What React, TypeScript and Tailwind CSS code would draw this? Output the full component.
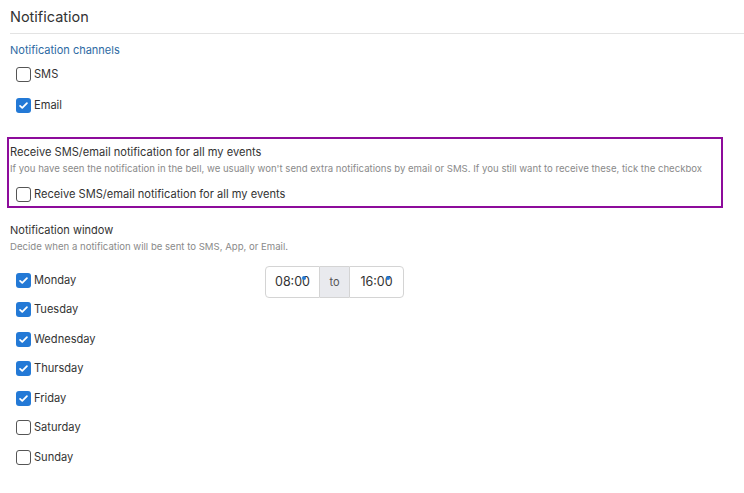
import { useState } from 'react'

const days = [
  { name: 'Monday', on: true },
  { name: 'Tuesday', on: true },
  { name: 'Wednesday', on: true },
  { name: 'Thursday', on: true },
  { name: 'Friday', on: true },
  { name: 'Saturday', on: false },
  { name: 'Sunday', on: false },
]

function Box({ checked }: { checked: boolean }) {
  if (checked) {
    return (
      <span className="flex h-[15px] w-[15px] shrink-0 items-center justify-center rounded-[3px] bg-[#2379d6]">
        <svg viewBox="0 0 16 16" className="h-[11px] w-[11px]" fill="none" stroke="white" strokeWidth="2.6" strokeLinecap="round" strokeLinejoin="round">
          <path d="M3 8.5l3.2 3L13 4.5" />
        </svg>
      </span>
    )
  }
  return <span className="h-[15px] w-[15px] shrink-0 rounded-[3px] border border-[#555] bg-white" />
}

function Check({ label, initial }: { label: string; initial: boolean }) {
  const [on, setOn] = useState(initial)
  return (
    <label className="flex h-[15px] cursor-pointer items-center gap-[3px] text-[11.1px] leading-[15px] text-[#333]" onClick={() => setOn(!on)}>
      <Box checked={on} />
      <span>{label}</span>
    </label>
  )
}

export default function App() {
  return (
    <div className="min-h-[493px] bg-white pl-[10px] text-[#333]" style={{ fontFamily: 'Inter, "Noto Sans", sans-serif' }}>
      <div className="border-b border-[#e3e3e3] pt-[7px] pb-[6px]">
        <h1 className="text-[14.5px] leading-[20px] font-normal text-[#333]">Notification</h1>
      </div>

      <div className="mt-[9px] text-[11px] leading-[14px] text-[#2d6aa3]">Notification channels</div>
      <div className="mt-[10px] flex flex-col gap-[15.5px] pl-[6px]">
        <Check label="SMS" initial={false} />
        <Check label="Email" initial={true} />
      </div>

      <div className="mt-[24.5px] mr-[21px] -ml-[3px] border-2 border-[#8d0c9b] px-[1px] pt-[5.5px] pb-[4px]">
        <div className="text-[11.1px] leading-[15px] text-[#333]">Receive SMS/email notification for all my events</div>
        <div className="mt-[2px] text-[9.6px] leading-[13px] text-[#8a8a8a]">
          If you have seen the notification in the bell, we usually won't send extra notifications by email or SMS. If you still want to receive these, tick the checkbox
        </div>
        <div className="mt-[12.5px] pl-[6px]">
          <Check label="Receive SMS/email notification for all my events" initial={false} />
        </div>
      </div>

      <div className="mt-[15px] text-[11px] leading-[15px] text-[#333]">Notification window</div>
      <div className="mt-[2px] text-[9.6px] leading-[13px] text-[#8a8a8a]">Decide when a notification will be sent to SMS, App, or Email.</div>

      <div className="mt-[19.5px] flex">
        <div className="flex w-[255px] flex-col gap-[14.5px] pl-[6px]">
          {days.map((d) => (
            <Check key={d.name} label={d.name} initial={d.on} />
          ))}
        </div>
        <div className="-mt-[6.5px] flex h-[32px] text-[12.5px] text-[#333]">
          <div className="relative flex w-[55px] items-center justify-center rounded-l-[4px] border border-[#d4d4d4] bg-white">
            08:00
            <span className="absolute top-[9px] right-[13px] h-[4px] w-[4px] rounded-full bg-[#2379d6]" />
          </div>
          <div className="flex w-[29px] items-center justify-center border-y border-[#d4d4d4] bg-[#e9eaee] text-[11px] text-[#555]">to</div>
          <div className="relative flex w-[55px] items-center justify-center rounded-r-[4px] border border-[#d4d4d4] bg-white">
            16:00
            <span className="absolute top-[9px] right-[13px] h-[4px] w-[4px] rounded-full bg-[#2379d6]" />
          </div>
        </div>
      </div>
    </div>
  )
}
